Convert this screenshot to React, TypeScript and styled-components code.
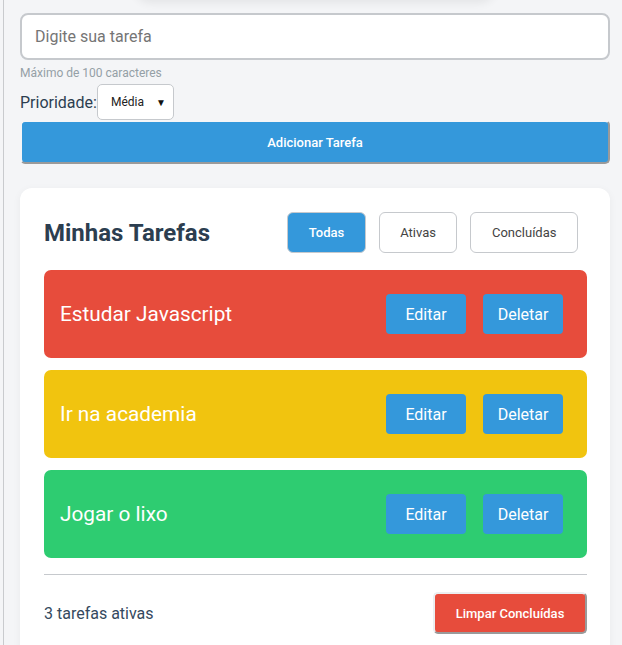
import React, { useState } from 'react';
import styled, { createGlobalStyle } from 'styled-components';

const GlobalStyle = createGlobalStyle`
  html, body {
    margin: 0;
    padding: 0;
    background: #f4f5f7;
    font-family: Roboto, "Liberation Sans", Arial, sans-serif;
    overflow: hidden;
  }
  * {
    box-sizing: border-box;
  }
`;

const Page = styled.div`
  margin-left: 3px;
  border-left: 1px solid #c9cbce;
  min-height: 645px;
  padding: 0 12px 0 16px;
`;

const TopShadow = styled.div`
  width: 360px;
  height: 30px;
  margin: -30px auto 0;
  border-radius: 16px;
  background: #f4f5f7;
  box-shadow: 0 3px 10px rgba(0, 0, 0, 0.07);
`;

const TaskInput = styled.input`
  display: block;
  width: 100%;
  height: 47px;
  margin-top: 13px;
  padding: 0 13px;
  border: 2px solid #c6c9cd;
  border-radius: 8px;
  background: #fff;
  font-family: inherit;
  font-size: 16px;
  color: #2c3e50;
  outline: none;

  &::placeholder {
    color: #757575;
  }
`;

const Hint = styled.div`
  margin-top: 5px;
  font-size: 12px;
  color: #95a0a6;
  line-height: 16px;
`;

const PriorityRow = styled.div`
  display: flex;
  align-items: center;
  margin-top: 3px;
`;

const PriorityLabel = styled.label`
  font-size: 16px;
  color: #2c3e50;
`;

const SelectWrap = styled.div`
  position: relative;
  width: 77px;
  height: 36px;

  &::after {
    content: '▼';
    position: absolute;
    right: 8px;
    top: 50%;
    transform: translateY(-50%);
    font-size: 10px;
    color: #111;
    pointer-events: none;
  }
`;

const PrioritySelect = styled.select`
  appearance: none;
  width: 100%;
  height: 100%;
  padding: 0 0 0 13px;
  border: 1px solid #c6c9cd;
  border-radius: 5px;
  background: #fff;
  font-family: inherit;
  font-size: 12px;
  color: #222;
  outline: none;
`;

const SolidButton = styled.button<{ $bg: string }>`
  background: ${({ $bg }) => $bg};
  color: #fff;
  font-family: inherit;
  font-size: 13px;
  font-weight: 500;
  border: 2px solid;
  border-color: #eceef0 #9a9a9a #9a9a9a #eceef0;
  border-radius: 5px;
  cursor: pointer;
`;

const AddButton = styled(SolidButton)`
  display: block;
  width: 100%;
  height: 44px;
  border-color: #f4f5f7 #9a9a9a #9a9a9a #f4f5f7;
`;

const Card = styled.section`
  margin-top: 24px;
  padding: 24px 23px 24px 24px;
  background: #fff;
  border-radius: 12px;
  box-shadow: 0 2px 8px rgba(0, 0, 0, 0.05);
`;

const CardHeader = styled.div`
  display: flex;
  align-items: center;
  justify-content: space-between;
  margin-bottom: 17px;
`;

const Title = styled.h2`
  margin: 0;
  font-size: 24px;
  font-weight: 700;
  color: #2c3e50;
`;

const Filters = styled.div`
  display: flex;
  gap: 13px;
  margin-right: 9px;
`;

const FilterButton = styled.button<{ $active: boolean }>`
  height: 41px;
  padding: 0 20.5px;
  border: 1px solid #c6c9cd;
  border-radius: 6px;
  background: ${({ $active }) => ($active ? '#3498db' : '#fff')};
  color: ${({ $active }) => ($active ? '#fff' : '#444')};
  font-family: inherit;
  font-size: 13px;
  font-weight: ${({ $active }) => ($active ? 500 : 400)};
  cursor: pointer;
`;

const TaskList = styled.div`
  display: flex;
  flex-direction: column;
  gap: 12px;
`;

const TaskItem = styled.div<{ $color: string }>`
  display: flex;
  align-items: center;
  justify-content: space-between;
  height: 88px;
  padding: 0 24px 0 16px;
  border-radius: 7px;
  background: ${({ $color }) => $color};
`;

const TaskText = styled.span`
  font-size: 20.8px;
  color: #fff;
`;

const TaskActions = styled.div`
  display: flex;
  gap: 17px;
`;

const ActionButton = styled.button`
  width: 80px;
  height: 40px;
  border: none;
  border-radius: 4px;
  background: #3498db;
  color: #fff;
  font-family: inherit;
  font-size: 16px;
  cursor: pointer;
`;

const Divider = styled.hr`
  margin: 16px 0 0;
  border: none;
  border-top: 1px solid #c6c9cd;
`;

const Footer = styled.div`
  display: flex;
  align-items: center;
  justify-content: space-between;
  padding-top: 17px;
`;

const Count = styled.span`
  font-size: 16px;
  color: #34495e;
`;

const ClearButton = styled(SolidButton)`
  width: 154px;
  height: 42px;
`;

type Filter = 'all' | 'active' | 'done';

const tasks = [
  { id: 1, text: 'Estudar Javascript', color: '#e74c3c' },
  { id: 2, text: 'Ir na academia', color: '#f1c40f' },
  { id: 3, text: 'Jogar o lixo', color: '#2ecc71' },
];

const filters: { key: Filter; label: string }[] = [
  { key: 'all', label: 'Todas' },
  { key: 'active', label: 'Ativas' },
  { key: 'done', label: 'Concluídas' },
];

export default function App() {
  const [filter, setFilter] = useState<Filter>('all');
  const [text, setText] = useState('');

  return (
    <>
      <GlobalStyle />
      <Page>
        <TopShadow />
        <TaskInput
          placeholder="Digite sua tarefa"
          maxLength={100}
          value={text}
          onChange={(e) => setText(e.target.value)}
        />
        <Hint>Máximo de 100 caracteres</Hint>
        <PriorityRow>
          <PriorityLabel htmlFor="prioridade">Prioridade:</PriorityLabel>
          <SelectWrap>
            <PrioritySelect id="prioridade" defaultValue="media">
              <option value="alta">Alta</option>
              <option value="media">Média</option>
              <option value="baixa">Baixa</option>
            </PrioritySelect>
          </SelectWrap>
        </PriorityRow>
        <AddButton $bg="#3498db">Adicionar Tarefa</AddButton>

        <Card>
          <CardHeader>
            <Title>Minhas Tarefas</Title>
            <Filters>
              {filters.map((f) => (
                <FilterButton
                  key={f.key}
                  $active={filter === f.key}
                  onClick={() => setFilter(f.key)}
                >
                  {f.label}
                </FilterButton>
              ))}
            </Filters>
          </CardHeader>
          <TaskList>
            {tasks.map((t) => (
              <TaskItem key={t.id} $color={t.color}>
                <TaskText>{t.text}</TaskText>
                <TaskActions>
                  <ActionButton>Editar</ActionButton>
                  <ActionButton>Deletar</ActionButton>
                </TaskActions>
              </TaskItem>
            ))}
          </TaskList>
          <Divider />
          <Footer>
            <Count>{tasks.length} tarefas ativas</Count>
            <ClearButton $bg="#e74c3c">Limpar Concluídas</ClearButton>
          </Footer>
        </Card>
      </Page>
    </>
  );
}
